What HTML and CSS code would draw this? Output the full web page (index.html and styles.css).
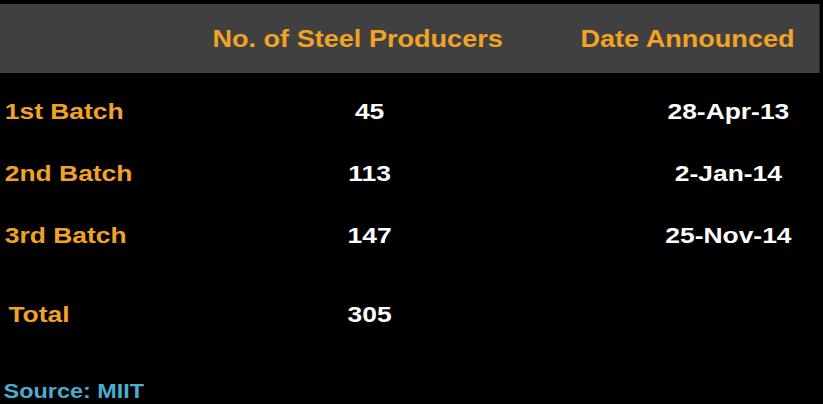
FILE: index.html
```html
<!DOCTYPE html>
<html>
<head>
<meta charset="utf-8">
<link rel="stylesheet" href="styles.css">
</head>
<body>
<div class="slide">
  <div class="head">
    <div class="hcell"></div>
    <div class="hcell"><span class="htext">No. of Steel Producers</span></div>
    <div class="hcell hdate"><span class="htext">Date Announced</span></div>
  </div>
  <div class="rows">
    <div class="row">
      <div class="label">1st Batch</div>
      <div class="num">45</div>
      <div class="date">28-Apr-13</div>
    </div>
    <div class="row">
      <div class="label">2nd Batch</div>
      <div class="num">113</div>
      <div class="date">2-Jan-14</div>
    </div>
    <div class="row">
      <div class="label">3rd Batch</div>
      <div class="num">147</div>
      <div class="date">25-Nov-14</div>
    </div>
    <div class="row total">
      <div class="label">Total</div>
      <div class="num">305</div>
      <div class="date"></div>
    </div>
  </div>
  <div class="source">Source: MIIT</div>
</div>
</body>
</html>
```

FILE: styles.css
```css
html, body {
  margin: 0;
  padding: 0;
  background: #000;
}
body {
  width: 823px;
  height: 404px;
  overflow: hidden;
  font-family: "Liberation Sans", Arial, sans-serif;
  font-weight: bold;
}
.slide {
  width: 686px;
  transform: scaleX(1.2);
  transform-origin: 0 0;
  padding-top: 4px;
}
.head {
  width: 683px;
  height: 69px;
  background: #404040;
  display: grid;
  grid-template-columns: 172px 240px 1fr;
  align-items: center;
  color: #f2a325;
  font-size: 23.5px;
  line-height: 28px;
}
.hcell {
  text-align: center;
  white-space: nowrap;
}
.htext {
  display: inline-block;
  transform: scaleX(0.96);
}
.hdate {
  padding-left: 51px;
}
.rows {
  display: flex;
  flex-direction: column;
  gap: 36px;
  padding-top: 26px;
}
.row {
  display: grid;
  grid-template-columns: 248px 120px 299px;
  font-size: 22px;
  line-height: 26px;
  white-space: nowrap;
}
.row.total {
  margin-top: 17px;
}
.label {
  color: #f2a325;
  padding-left: 4px;
}
.total .label {
  padding-left: 7px;
}
.num {
  color: #fff;
  text-align: center;
}
.date {
  color: #fff;
  text-align: center;
  padding-left: 179px;
}
.source {
  margin-top: 51px;
  padding-left: 3px;
  color: #4aacd0;
  font-size: 19.5px;
  line-height: 24px;
}
```
